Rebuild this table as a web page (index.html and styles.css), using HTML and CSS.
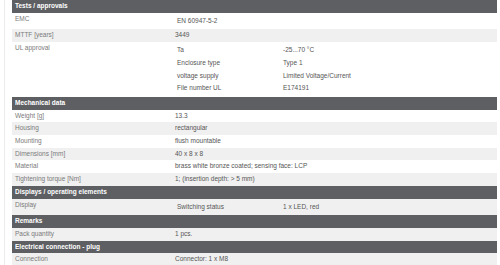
FILE: index.html
```html
<!DOCTYPE html>
<html>
<head>
<meta charset="utf-8">
<link rel="stylesheet" href="styles.css">
</head>
<body>
<div class="page">
<table class="spec">
<colgroup><col class="c-label"><col class="c-value"></colgroup>
<tbody>
<tr class="head"><th colspan="2">Tests / approvals</th></tr>
<tr><td class="lbl">EMC</td><td class="nest"><table class="sub"><tr><td class="sv">EN 60947-5-2</td></tr></table></td></tr>
<tr class="alt"><td class="lbl">MTTF [years]</td><td class="val">3449</td></tr>
<tr><td class="lbl">UL approval</td><td class="nest"><table class="sub">
<tr><td class="sk">Ta</td><td class="sv">-25...70 °C</td></tr>
<tr><td class="sk">Enclosure type</td><td class="sv">Type 1</td></tr>
<tr><td class="sk">voltage supply</td><td class="sv">Limited Voltage/Current</td></tr>
<tr><td class="sk">File number UL</td><td class="sv">E174191</td></tr>
</table></td></tr>
<tr class="head"><th colspan="2">Mechanical data</th></tr>
<tr><td class="lbl">Weight [g]</td><td class="val">13.3</td></tr>
<tr class="alt"><td class="lbl">Housing</td><td class="val">rectangular</td></tr>
<tr><td class="lbl">Mounting</td><td class="val">flush mountable</td></tr>
<tr class="alt"><td class="lbl">Dimensions [mm]</td><td class="val">40 x 8 x 8</td></tr>
<tr><td class="lbl">Material</td><td class="val">brass white bronze coated; sensing face: LCP</td></tr>
<tr class="alt"><td class="lbl">Tightening torque [Nm]</td><td class="val">1; (insertion depth: &gt; 5 mm)</td></tr>
<tr class="head"><th colspan="2">Displays / operating elements</th></tr>
<tr class="alt"><td class="lbl">Display</td><td class="nest"><table class="sub"><tr><td class="sk">Switching status</td><td class="sv">1 x LED, red</td></tr></table></td></tr>
<tr class="head"><th colspan="2">Remarks</th></tr>
<tr class="alt"><td class="lbl">Pack quantity</td><td class="val">1 pcs.</td></tr>
<tr class="head"><th colspan="2">Electrical connection - plug</th></tr>
<tr class="alt"><td class="lbl">Connection</td><td class="val">Connector: 1 x M8</td></tr>
</tbody>
</table>
</div>
</body>
</html>
```

FILE: styles.css
```css
html, body {
  margin: 0;
  padding: 0;
  background: #ffffff;
}
.page {
  margin-left: 4px;
  border-left: 1px solid #ececec;
  padding-left: 7px;
  min-height: 265px;
  font-family: "Liberation Sans", Arial, sans-serif;
  font-size: 6.5px;
  line-height: 8.7px;
}
.spec {
  width: 485px;
  border-collapse: collapse;
  border-spacing: 0;
  table-layout: fixed;
}
.c-label { width: 160px; }
.spec td, .spec th {
  padding: 2px 3px;
  vertical-align: top;
  text-align: left;
}
.spec tr.alt > td {
  background: #f0f0f0;
}
.spec .head th {
  background: #5e5f63;
  color: #ffffff;
  font-weight: bold;
}
.lbl { color: #7a7a7a; }
.val { color: #555555; }
.spec td.nest { padding: 2px; }
.sub {
  border-collapse: collapse;
  border-spacing: 0;
  width: 100%;
}
.sub td {
  padding: 2px 3px;
  vertical-align: top;
  color: #555555;
}
.sub td.sk { width: 100px; }
```
